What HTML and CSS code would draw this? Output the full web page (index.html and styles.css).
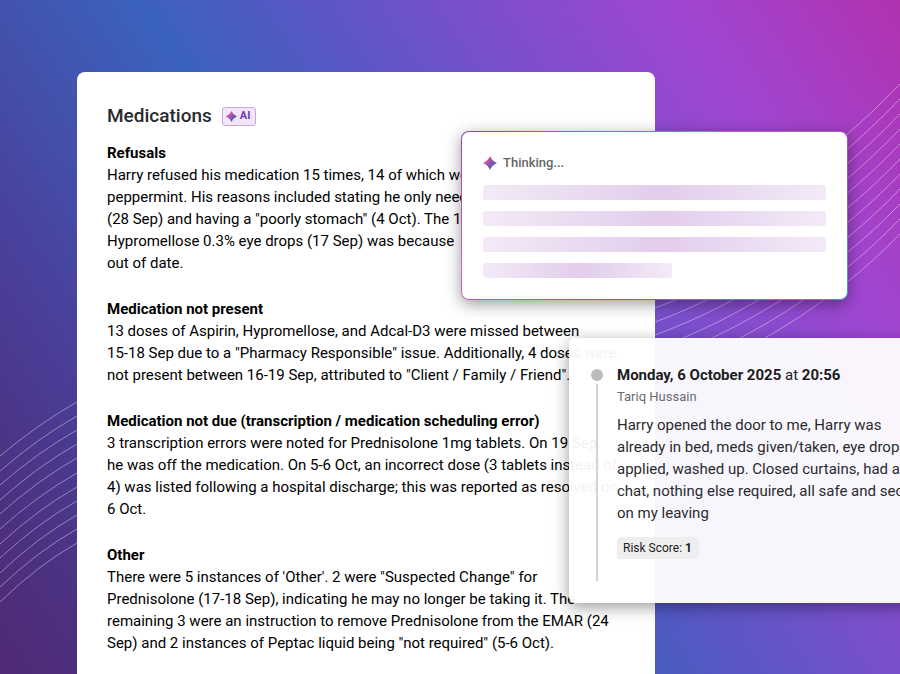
FILE: index.html
```
<!DOCTYPE html>
<html lang="en">
<head>
    <meta charset="UTF-8">
    <meta name="viewport" content="width=device-width, initial-scale=1.0">
    <title>Medications</title>
    <link rel="stylesheet" href="styles.css">
</head>
<body>
    <div class="stage">
        <svg class="waves" viewBox="0 0 900 674" preserveAspectRatio="xMidYMid slice" aria-hidden="true">
            <path d="M0 456Q38 424 77 402C250 320 500 300 655 254C740 223 830 157 900 84"/>
            <path d="M0 471Q38 438 77 416C250 334 500 314 655 268C740 237 830 172 900 99"/>
            <path d="M0 485Q38 452 77 430C250 348 500 328 655 281C740 250 830 187 900 114"/>
            <path d="M0 500Q38 466 77 444C250 362 500 342 655 295C740 264 830 202 900 129"/>
            <path d="M0 514Q38 480 77 458C250 376 500 356 655 308C740 277 830 217 900 144"/>
            <path d="M0 529Q38 495 77 473C250 391 500 371 655 322C740 291 830 232 900 159"/>
            <path d="M0 544Q38 509 77 487C250 405 500 385 655 335C740 304 830 247 900 174"/>
            <path d="M0 558Q38 523 77 501C250 419 500 399 655 349C740 318 830 262 900 189"/>
            <path d="M0 573Q38 537 77 515C250 433 500 413 655 362C740 331 830 277 900 204"/>
            <path d="M0 587Q38 551 77 529C250 447 500 427 655 376C740 345 830 292 900 219"/>
            <path d="M0 602Q38 565 77 543C250 461 500 441 655 389C740 358 830 307 900 234"/>
        </svg>

        <main class="report">
            <header class="report-header">
                <h1>Medications</h1>
                <span class="ai-badge">
                    <svg class="sparkle" viewBox="0 0 14 14" aria-hidden="true">
                        <defs>
                            <linearGradient id="sparkle-fill" x1="0" y1="0" x2="1" y2="1">
                                <stop offset="0.25" stop-color="#d850a0"/>
                                <stop offset="0.75" stop-color="#5058c0"/>
                            </linearGradient>
                        </defs>
                        <path fill="url(#sparkle-fill)" d="M7 0Q9 5 14 7Q9 9 7 14Q5 9 0 7Q5 5 7 0Z"/>
                    </svg>
                    AI
                </span>
            </header>

            <section>
                <h2>Refusals</h2>
                <p>Harry refused his medication 15 times, 14 of which were<br>
                peppermint. His reasons included stating he only needed it<br>
                (28 Sep) and having a "poorly stomach" (4 Oct). The 1 for<br>
                Hypromellose 0.3% eye drops (17 Sep) was because<br>
                out of date.</p>
            </section>
            <section>
                <h2>Medication not present</h2>
                <p>13 doses of Aspirin, Hypromellose, and Adcal-D3 were missed between<br>
                15-18 Sep due to a "Pharmacy Responsible" issue. Additionally, 4 doses were<br>
                not present between 16-19 Sep, attributed to "Client / Family / Friend".</p>
            </section>
            <section>
                <h2>Medication not due (transcription / medication scheduling error)</h2>
                <p>3 transcription errors were noted for Prednisolone 1mg tablets. On 19 Sep,<br>
                he was off the medication. On 5-6 Oct, an incorrect dose (3 tablets instead of<br>
                4) was listed following a hospital discharge; this was reported as resolved on<br>
                6 Oct.</p>
            </section>
            <section>
                <h2>Other</h2>
                <p>There were 5 instances of 'Other'. 2 were "Suspected Change" for<br>
                Prednisolone (17-18 Sep), indicating he may no longer be taking it. The<br>
                remaining 3 were an instruction to remove Prednisolone from the EMAR (24<br>
                Sep) and 2 instances of Peptac liquid being "not required" (5-6 Oct).</p>
            </section>
        </main>

        <aside class="thinking">
            <div class="thinking-label">
                <svg class="sparkle" viewBox="0 0 14 14" aria-hidden="true">
                    <path fill="url(#sparkle-fill)" d="M7 0Q9 5 14 7Q9 9 7 14Q5 9 0 7Q5 5 7 0Z"/>
                </svg>
                Thinking...
            </div>
            <div class="skeleton"></div>
            <div class="skeleton"></div>
            <div class="skeleton"></div>
            <div class="skeleton short"></div>
        </aside>

        <article class="visit">
            <div class="timeline">
                <span class="dot"></span>
                <span class="line"></span>
            </div>
            <div class="visit-body">
                <h3>Monday, 6 October 2025 <span>at</span> 20:56</h3>
                <div class="carer">Tariq Hussain</div>
                <p>Harry opened the door to me, Harry was<br>
                already in bed, meds given/taken, eye drops<br>
                applied, washed up. Closed curtains, had a<br>
                chat, nothing else required, all safe and secure<br>
                on my leaving</p>
                <span class="risk">Risk Score: <b>1</b></span>
            </div>
        </article>
    </div>
</body>
</html>
```
FILE: styles.css
```
* {
    box-sizing: border-box;
}

body {
    margin: 0;
    font-family: Roboto, Arial, sans-serif;
    font-size: 15px;
    line-height: 22px;
    color: #000;
}

h1, h2, h3, p {
    margin: 0;
}

.stage {
    position: relative;
    height: 100vh;
    overflow: hidden;
    padding: 72px 0 0 77px;
    background: linear-gradient(57deg, #502a74 0%, #4c3080 8%, #4a3e98 20%, #4253ad 33%, #3a62be 43%, #5558c4 54%, #7650cb 66%, #a046d2 83%, #b032ae 100%);
}

.waves {
    position: absolute;
    top: 0;
    left: 0;
    width: 100%;
    height: 100%;
    fill: none;
    stroke: rgba(255, 255, 255, 0.4);
    stroke-width: 1;
}

.report {
    position: relative;
    width: 70.2%;
    min-height: 100%;
    padding: 30px;
    background: #fff;
    border-radius: 8px 8px 0 0;
    white-space: nowrap;
}

.report-header {
    display: flex;
    align-items: center;
    gap: 10px;
    height: 28px;
    margin-bottom: 12px;
}

.report-header h1 {
    font-size: 19px;
    font-weight: 500;
    color: #2a2a2e;
}

.report section {
    margin-bottom: 24px;
}

.report h2,
.visit h3 {
    font-size: 15px;
    font-weight: 700;
}

.ai-badge {
    display: flex;
    align-items: center;
    gap: 3px;
    height: 19px;
    padding: 0 5px 0 3px;
    border: 1px solid #d0a4e0;
    border-radius: 3px;
    background: #f1e6f8;
    color: #6a3cab;
    font-size: 11px;
    font-weight: 700;
}

.sparkle {
    width: 14px;
    height: 14px;
}

.ai-badge .sparkle {
    width: 11px;
    height: 11px;
}

.thinking {
    position: absolute;
    top: 131px;
    left: 461px;
    width: 387px;
    display: flex;
    flex-direction: column;
    gap: 11px;
    padding: 20px 21px 21px;
    border: 1px solid transparent;
    border-radius: 8px;
    background:
        linear-gradient(#fff, #fff) padding-box,
        linear-gradient(150deg, #8a48b0 0%, #d860c0 35%, #9a50c0 65%, #40a0e0 100%) border-box;
    box-shadow: 0 4px 16px rgba(0, 0, 0, 0.4);
}

.thinking-label {
    display: flex;
    align-items: center;
    gap: 6px;
    font-size: 13px;
    font-weight: 500;
    color: #666;
}

.skeleton {
    height: 15px;
    border-radius: 3px;
    background: linear-gradient(90deg, #f4eaf7, #e2cdeb 52%, #f3eaf8);
}

.skeleton.short {
    width: 55%;
}

.visit {
    position: absolute;
    top: 338px;
    left: 569px;
    width: 372px;
    display: flex;
    gap: 14px;
    padding: 26px 22px 22px;
    border-radius: 6px;
    background: rgba(255, 255, 255, 0.95);
    box-shadow: 0 4px 16px rgba(0, 0, 0, 0.4);
    color: #2a2a2e;
    white-space: nowrap;
}

.timeline {
    display: flex;
    flex-direction: column;
    align-items: center;
    gap: 3px;
    width: 12px;
    padding-top: 5px;
}

.dot {
    width: 12px;
    height: 12px;
    border-radius: 50%;
    background: #bbb;
}

.line {
    flex: 1;
    width: 2px;
    background: #d4d4d6;
}

.visit-body {
    padding-bottom: 22px;
}

.visit h3 {
    color: #1c1c1e;
}

.visit h3 span {
    font-weight: 400;
}

.carer {
    margin-bottom: 6px;
    font-size: 13px;
    color: #6a6a6e;
}

.risk {
    display: inline-block;
    margin-top: 13px;
    padding: 0 7px 0 6px;
    border-radius: 4px;
    background: #eeeeef;
    font-size: 12px;
    color: #1c1c1e;
}
```
